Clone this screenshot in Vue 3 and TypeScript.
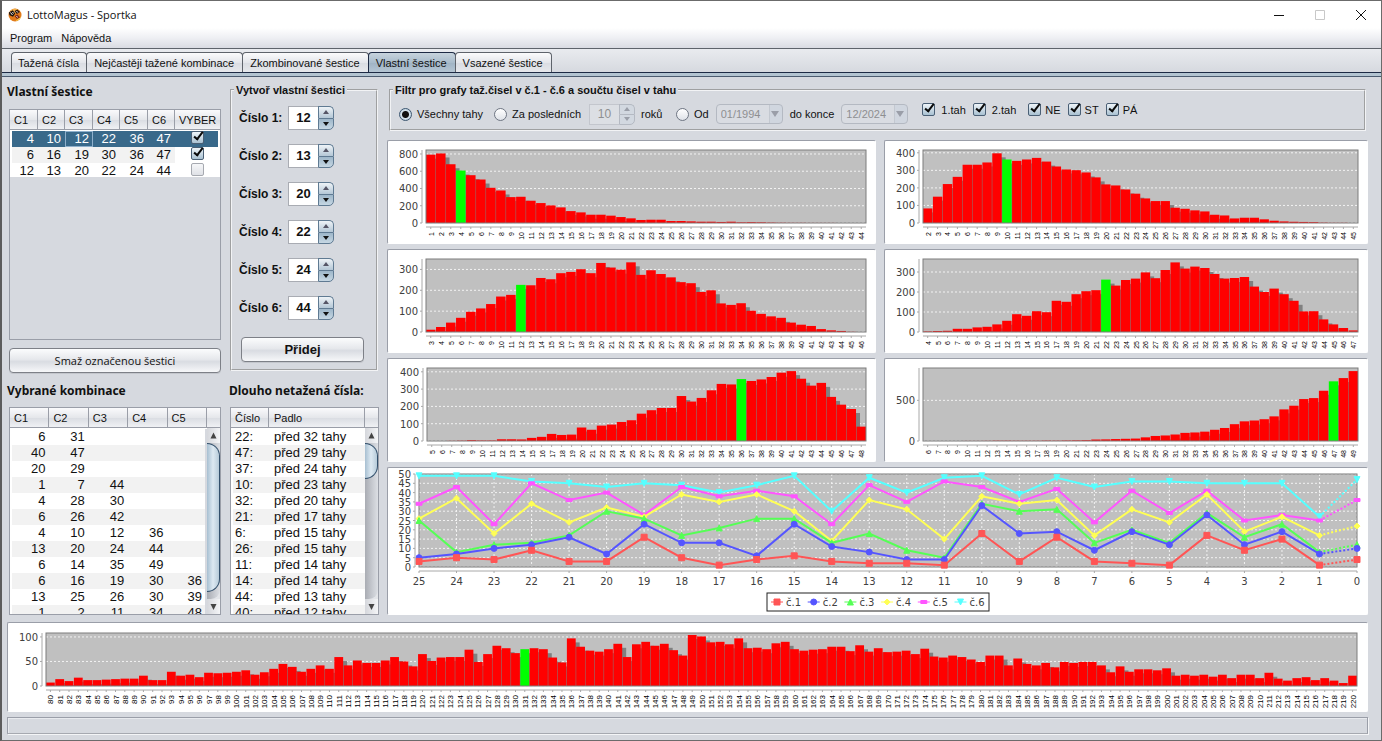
<script setup lang="ts">
import { ref } from 'vue'

interface Histogram {
  id: string
  label: string
  width: number
  height: number
  plotX: number
  plotY: number
  plotW: number
  plotH: number
  axisMax: number
  ticks: number[]
  first: number
  marked: number
  fontSize: number
  values: number[]
}

const small = { height: 102, plotY: 9, plotH: 73, fontSize: 7 }

const histograms: Histogram[] = [
  {
    ...small, id: 'n1', label: 'č.1', width: 487, plotX: 38, plotW: 440, axisMax: 846, ticks: [0, 200, 400, 600, 800], first: 1, marked: 4,
    values: [792, 806, 681, 608, 554, 504, 408, 377, 300, 304, 258, 231, 204, 181, 138, 123, 96, 96, 85, 69, 54, 35, 38, 38, 23, 23, 19, 15, 15, 12, 15, 8, 10, 8, 5, 3, 2, 2, 1, 1, 1, 0, 0, 0],
  },
  {
    ...small, id: 'n2', label: 'č.2', width: 482, plotX: 38, plotW: 435, axisMax: 416, ticks: [0, 100, 200, 300, 400], first: 2, marked: 10,
    values: [83, 150, 222, 263, 332, 332, 345, 397, 362, 354, 362, 371, 350, 322, 305, 301, 288, 260, 220, 214, 191, 167, 140, 125, 125, 87, 81, 72, 66, 47, 43, 26, 30, 30, 21, 13, 9, 7, 6, 5, 2, 1, 1, 0],
  },
  {
    ...small, id: 'n3', label: 'č.3', width: 487, plotX: 38, plotW: 440, axisMax: 350, ticks: [0, 100, 200, 300], first: 3, marked: 12,
    values: [11, 24, 45, 68, 97, 113, 134, 170, 178, 226, 224, 259, 253, 282, 288, 301, 282, 331, 309, 299, 334, 274, 296, 278, 262, 239, 234, 192, 200, 137, 130, 138, 102, 87, 75, 68, 45, 35, 29, 14, 8, 5, 1, 0],
  },
  {
    ...small, id: 'n4', label: 'č.4', width: 482, plotX: 38, plotW: 435, axisMax: 365, ticks: [0, 100, 200, 300], first: 4, marked: 22,
    values: [3, 5, 6, 16, 16, 23, 26, 38, 56, 89, 81, 104, 99, 156, 151, 189, 204, 209, 262, 232, 260, 267, 298, 269, 310, 348, 317, 327, 320, 290, 267, 270, 275, 227, 200, 217, 189, 156, 103, 104, 63, 38, 20, 8],
  },
  {
    ...small, id: 'n5', label: 'č.5', width: 487, plotX: 39, plotW: 439, axisMax: 422, ticks: [0, 100, 200, 300, 400], first: 5, marked: 36,
    values: [0, 0, 1, 2, 5, 3, 3, 10, 10, 9, 18, 24, 41, 35, 37, 78, 65, 89, 95, 110, 120, 158, 178, 191, 191, 260, 228, 249, 293, 330, 327, 358, 347, 356, 370, 395, 404, 360, 320, 336, 255, 210, 185, 83],
  },
  {
    ...small, id: 'n6', label: 'č.6', width: 482, plotX: 38, plotW: 435, axisMax: 898, ticks: [0, 500], first: 6, marked: 47,
    values: [0, 0, 0, 0, 1, 1, 2, 4, 4, 3, 3, 3, 5, 4, 6, 8, 10, 18, 20, 24, 27, 30, 45, 62, 68, 80, 100, 105, 115, 138, 160, 207, 242, 252, 268, 303, 389, 434, 516, 528, 618, 734, 774, 860],
  },
  {
    id: 'sum', label: 'Součet', width: 1359, height: 88, plotX: 38, plotY: 10, plotW: 1311, plotH: 53, fontSize: 8, axisMax: 108, ticks: [0, 50, 100], first: 80, marked: 131,
    values: [
      7, 14, 10, 17, 12, 12, 13, 14, 15, 15, 21, 12, 12, 29, 21, 23, 18, 27, 26, 27,
      29, 32, 23, 28, 35, 45, 39, 29, 35, 42, 35, 59, 42, 52, 47, 47, 52, 59, 50, 40,
      65, 51, 58, 59, 59, 74, 49, 65, 82, 77, 67, 75, 77, 75, 58, 48, 97, 80, 72, 70,
      75, 86, 59, 85, 90, 82, 86, 73, 62, 104, 101, 89, 90, 85, 97, 77, 78, 75, 87, 90,
      75, 72, 74, 75, 80, 80, 71, 83, 70, 77, 69, 70, 72, 65, 76, 60, 58, 62, 59, 54,
      49, 62, 62, 42, 56, 45, 42, 47, 38, 49, 47, 49, 49, 42, 28, 40, 29, 34, 34, 32,
      36, 21, 23, 21, 23, 19, 23, 16, 23, 23, 16, 27, 15, 11, 16, 18, 12, 16, 11, 6, 21,
    ],
  },
]

const GAP = 0.5
const SHADOW = 4

function yOf(c: Histogram, v: number): number {
  return c.plotY + c.plotH - (v / c.axisMax) * c.plotH
}

function barsOf(c: Histogram) {
  const n = c.values.length
  const w = (c.plotW - GAP * (n - 1)) / n
  const right = c.plotX + c.plotW
  const bottom = c.plotY + c.plotH
  return c.values.map((v, i) => {
    const x = c.plotX + i * (w + GAP)
    const h = (v / c.axisMax) * c.plotH
    return {
      name: c.first + i,
      x,
      y: bottom - h,
      w,
      h,
      mid: x + w / 2,
      sx: x + SHADOW,
      sy: bottom - Math.max(0, h - SHADOW),
      sw: Math.max(0, Math.min(w, right - x - SHADOW)),
      sh: Math.max(0, h - SHADOW),
    }
  })
}

const charts = histograms.map((c) => ({ ...c, bars: barsOf(c), marks: c.ticks.map((v) => ({ v, y: yOf(c, v) })) }))

const plot = { x: 31, y: 6, w: 938, h: 93 }
const lx = (i: number): number => plot.x + (i * plot.w) / 25
const ly = (v: number): number => plot.y + plot.h - (v / 50) * plot.h

const series = [
  { name: 'č.1', color: '#ff5555', shape: 'M-3-3h6v6h-6z', data: [3, 5, 4, 9, 3, 3, 16, 5, 1, 4, 6, 3, 2, 2, 1, 18, 3, 16, 3, 2, 1, 17, 9, 15, 1, 4] },
  { name: 'č.2', color: '#5555ff', shape: 'M-3 0a3 3 0 1 0 6 0a3 3 0 1 0-6 0z', data: [5, 7, 10, 12, 16, 7, 23, 13, 13, 6, 23, 11, 8, 4, 4, 33, 18, 19, 9, 19, 12, 28, 12, 19, 7, 10] },
  { name: 'č.3', color: '#55ff55', shape: 'M0-3l3 6h-6z', data: [25, 8, 12, 13, 17, 30, 26, 17, 21, 26, 26, 13, 18, 9, 5, 34, 30, 31, 13, 20, 13, 29, 16, 23, 8, 12] },
  { name: 'č.4', color: '#ffff55', shape: 'M0-3l3 3l-3 3l-3-3z', data: [26, 37, 18, 34, 24, 32, 27, 39, 35, 39, 30, 14, 36, 31, 15, 38, 34, 36, 17, 31, 24, 39, 19, 27, 17, 22] },
  { name: 'č.5', color: '#ff55ff', shape: 'M-3-1.5h6v3h-6z', data: [34, 43, 23, 45, 36, 40, 28, 43, 38, 41, 38, 23, 44, 35, 46, 43, 35, 42, 24, 41, 29, 41, 25, 28, 25, 36] },
  { name: 'č.6', color: '#55ffff', shape: 'M-3-3h6l-3 6z', data: [49, 49, 49, 46, 45, 43, 45, 44, 40, 44, 49, 30, 48, 40, 48, 49, 39, 48, 43, 46, 46, 45, 45, 45, 27, 47] },
].map((s) => {
  const pts = s.data.map((v, i) => ({ x: lx(i), y: ly(v) }))
  return {
    ...s,
    pts,
    solid: pts.slice(0, 25).map((p) => `${p.x},${p.y}`).join(' '),
    dotted: pts.slice(24).map((p) => `${p.x},${p.y}`).join(' '),
  }
}).reverse()

const legend = [...series].reverse()
const lineTicks = [0, 5, 10, 15, 20, 25, 30, 35, 40, 45, 50]
const draws = Array.from({ length: 26 }, (_, i) => i)

const tabs = ['Tažená čísla', 'Nejčastěji tažené kombinace', 'Zkombinované šestice', 'Vlastní šestice', 'Vsazené šestice']
const activeTab = ref(3)

const sixes = ref([
  { nums: [4, 10, 12, 22, 36, 47], picked: true },
  { nums: [6, 16, 19, 30, 36, 47], picked: true },
  { nums: [12, 13, 20, 22, 24, 44], picked: false },
])
const selected = ref(0)

const own = ref([12, 13, 20, 22, 24, 44])
function step(i: number, d: number): void {
  own.value[i] = Math.min(49, Math.max(1, Number(own.value[i]) + d))
}
function addSix(): void {
  sixes.value.push({ nums: own.value.map(Number), picked: false })
}
function removeSix(): void {
  sixes.value.splice(selected.value, 1)
}

const combos: number[][] = [
  [6, 31], [40, 47], [20, 29], [1, 7, 44], [4, 28, 30], [6, 26, 42], [4, 10, 12, 36],
  [13, 20, 24, 44], [6, 14, 35, 49], [6, 16, 19, 30, 36], [13, 25, 26, 30, 39], [1, 2, 11, 34, 48],
]
const missing: [number, number][] = [
  [22, 32], [47, 29], [37, 24], [10, 23], [32, 20], [21, 17], [6, 15], [26, 15], [11, 14], [14, 14], [44, 13], [40, 12],
]

const range = ref('all')
const years = ref(10)
const from = ref('01/1994')
const to = ref('12/2024')
const drawFilters = ref([
  { name: '1.tah', on: true },
  { name: '2.tah', on: true },
])
const dayFilters = ref([
  { name: 'NE', on: true },
  { name: 'ST', on: true },
  { name: 'PÁ', on: true },
])
</script>

<template>
  <div class="window">
    <header class="titlebar">
      <svg class="logo" viewBox="0 0 14 14" aria-hidden="true">
        <circle cx="7" cy="7" r="6.5" fill="#e07a1c" />
        <path d="M2.500 2.500a6.500 6.500 0 0 1 9 0l-4.500 3z" fill="#f3b04a" />
        <path d="M8 12.500l5-4a6.500 6.500 0 0 1-5 4.500z" fill="#f8cf4a" />
        <path d="M.8 4.500l4-2.300l2.400 3.300l-2.200 3.300l-3.500-1.600z" fill="#1c130c" />
        <path d="M6.500 3l3-1.500l2.500 2.500l-3.200 2z" fill="#2a160e" />
        <path d="M6.500 8l3-1.500l2.500 3l-3 1.500z" fill="#7a2412" />
        <path d="M2.500 4.500l2 2.500M4.500 4l1 1.500M8.500 3l1.200 1.500M8.500 8l1 1.500" stroke="#fff" stroke-width=".9" />
      </svg>
      <span class="title">LottoMagus - Sportka</span>
      <button class="sys" type="button" aria-label="Minimalizovat"><svg viewBox="0 0 10 10"><path d="M0 5.500h10" stroke="#111" /></svg></button>
      <button class="sys" type="button" aria-label="Maximalizovat"><svg viewBox="0 0 10 10"><path d="M.5.5h9v9h-9z" fill="none" stroke="#c8c8c8" /></svg></button>
      <button class="sys" type="button" aria-label="Zavřít"><svg viewBox="0 0 10 10"><path d="M0 0l10 10M10 0l-10 10" stroke="#111" /></svg></button>
    </header>

    <nav class="menubar">
      <button type="button">Program</button>
      <button type="button">Nápověda</button>
    </nav>

    <div class="tabs" role="tablist">
      <button v-for="(t, i) in tabs" :key="t" type="button" role="tab" :aria-selected="i === activeTab" :class="{ active: i === activeTab }" @click="activeTab = i">{{ t }}</button>
    </div>

    <main class="content">
      <section class="col sixes">
        <h2>Vlastní šestice</h2>
        <div class="box six-box">
          <div class="clip">
            <table class="six-table">
              <colgroup><col v-for="n in 6" :key="n" class="c-num" /><col /></colgroup>
              <thead><tr><th v-for="n in 6" :key="n">C{{ n }}</th><th>VYBER</th></tr></thead>
              <tbody>
                <tr v-for="(s, i) in sixes" :key="i" :class="{ selected: i === selected }" @click="selected = i">
                  <td v-for="(n, j) in s.nums" :key="j" :class="{ focus: i === selected && j === 2 }">{{ n }}</td>
                  <td class="pick"><input v-model="s.picked" type="checkbox" class="check" :aria-label="'Vybrat šestici ' + (i + 1)" /></td>
                </tr>
              </tbody>
            </table>
          </div>
        </div>
        <button type="button" class="btn remove" @click="removeSix">Smaž označenou šestici</button>
        <h2>Vybrané kombinace</h2>
        <div class="box list-box">
          <table class="combo-table">
            <thead><tr><th v-for="n in 5" :key="n">C{{ n }}</th></tr></thead>
            <tbody>
              <tr v-for="(c, i) in combos" :key="i"><td v-for="j in 5" :key="j">{{ c[j - 1] ?? '' }}</td></tr>
            </tbody>
          </table>
          <div class="scroll" aria-hidden="true">
            <div class="corner"></div>
            <svg class="arrow" viewBox="0 0 13 15"><path d="M6.500 4.500l3 6h-6z" fill="#444" /></svg>
            <div class="track"><div class="thumb long"></div></div>
            <svg class="arrow" viewBox="0 0 13 15"><path d="M6.500 11l3-6h-6z" fill="#444" /></svg>
          </div>
        </div>
      </section>

      <section class="col create">
        <fieldset class="own">
          <legend>Vytvoř vlastní šestici</legend>
          <div v-for="(n, i) in own" :key="i" class="num-row">
            <label :for="'own' + i">Číslo {{ i + 1 }}:</label>
            <span class="spinner">
              <input :id="'own' + i" v-model="own[i]" type="text" inputmode="numeric" />
              <span class="steps">
                <button type="button" aria-label="Zvýšit" @click="step(i, 1)"><svg viewBox="0 0 6 4"><path d="M3 0l3 4h-6z" fill="#556" /></svg></button>
                <button type="button" aria-label="Snížit" @click="step(i, -1)"><svg viewBox="0 0 6 4"><path d="M3 4l3-4h-6z" fill="#111" /></svg></button>
              </span>
            </span>
          </div>
          <button type="button" class="btn add" @click="addSix">Přidej</button>
        </fieldset>
        <h2>Dlouho netažená čísla:</h2>
        <div class="box list-box miss-box">
          <table class="miss-table">
            <colgroup><col class="c-no" /><col /></colgroup>
            <thead><tr><th>Číslo</th><th>Padlo</th></tr></thead>
            <tbody>
              <tr v-for="m in missing" :key="m[0]"><td>{{ m[0] }}:</td><td>před {{ m[1] }} tahy</td></tr>
            </tbody>
          </table>
          <div class="scroll" aria-hidden="true">
            <div class="corner"></div>
            <svg class="arrow" viewBox="0 0 13 15"><path d="M6.500 4.500l3 6h-6z" fill="#444" /></svg>
            <div class="track"><div class="thumb"></div></div>
            <svg class="arrow" viewBox="0 0 13 15"><path d="M6.500 11l3-6h-6z" fill="#444" /></svg>
          </div>
        </div>
      </section>

      <fieldset class="filter">
        <legend>Filtr pro grafy taž.čisel v č.1 - č.6 a součtu čisel v tahu</legend>
        <div class="filter-row">
          <label class="opt all"><input v-model="range" type="radio" value="all" name="range" />Všechny tahy</label>
          <label class="opt last"><input v-model="range" type="radio" value="last" name="range" />Za posledních</label>
          <span class="spinner off">
            <input v-model="years" type="text" aria-label="Počet roků" :disabled="range !== 'last'" />
            <span class="steps">
              <button type="button" aria-label="Více roků" :disabled="range !== 'last'"><svg viewBox="0 0 6 4"><path d="M3 0l3 4h-6z" fill="#9a9ea8" /></svg></button>
              <button type="button" aria-label="Méně roků" :disabled="range !== 'last'"><svg viewBox="0 0 6 4"><path d="M3 4l3-4h-6z" fill="#9a9ea8" /></svg></button>
            </span>
          </span>
          <span class="years">roků</span>
          <label class="opt"><input v-model="range" type="radio" value="from" name="range" />Od</label>
          <span class="combo"><select v-model="from" aria-label="Od" :disabled="range !== 'from'"><option>01/1994</option></select></span>
          <label for="to" class="until">do konce</label>
          <span class="combo"><select id="to" v-model="to" :disabled="range !== 'from'"><option>12/2024</option></select></span>
          <div class="checks">
            <label v-for="f in drawFilters" :key="f.name" class="opt"><input v-model="f.on" type="checkbox" class="check" />{{ f.name }}</label>
          </div>
          <div class="checks days">
            <label v-for="f in dayFilters" :key="f.name" class="opt"><input v-model="f.on" type="checkbox" class="check" />{{ f.name }}</label>
          </div>
        </div>
      </fieldset>

      <figure v-for="c in charts" :key="c.id" class="panel" :class="c.id">
        <svg :viewBox="`0 0 ${c.width} ${c.height}`" role="img" :aria-label="c.label">
          <rect class="plot" :x="c.plotX" :y="c.plotY" :width="c.plotW" :height="c.plotH" />
          <line v-for="m in c.marks" :key="m.v" class="grid" :x1="c.plotX" :x2="c.plotX + c.plotW" :y1="m.y" :y2="m.y" />
          <template v-for="b in c.bars" :key="b.name">
            <rect class="shadow" :x="b.sx" :y="b.sy" :width="b.sw" :height="b.sh" />
            <rect class="bar" :class="{ hit: b.name === c.marked }" :x="b.x" :y="b.y" :width="b.w" :height="b.h" />
          </template>
          <rect class="frame" :x="c.plotX" :y="c.plotY" :width="c.plotW" :height="c.plotH" />
          <path class="axis" :d="`M${c.plotX - 4} ${c.plotY}v${c.plotH}M${c.plotX} ${c.plotY + c.plotH + 4}h${c.plotW}`" />
          <g v-for="m in c.marks" :key="'t' + m.v">
            <path class="axis" :d="`M${c.plotX - 6} ${m.y}h2`" />
            <text class="value" :x="c.plotX - 8" :y="m.y + 4">{{ m.v }}</text>
          </g>
          <g v-for="b in c.bars" :key="'l' + b.name">
            <path class="axis" :d="`M${b.mid} ${c.plotY + c.plotH + 4}v2`" />
            <text class="cat" :font-size="c.fontSize" :transform="`translate(${b.mid + 3} ${c.plotY + c.plotH + 9}) rotate(-90)`">{{ b.name }}</text>
          </g>
        </svg>
      </figure>

      <figure class="panel lines">
        <svg viewBox="0 0 979 146" role="img" aria-label="Vývoj č.1 – č.6">
          <rect class="plot" :x="plot.x" :y="plot.y" :width="plot.w" :height="plot.h" />
          <line v-for="v in lineTicks" :key="v" class="grid" :x1="plot.x" :x2="plot.x + plot.w" :y1="ly(v)" :y2="ly(v)" />
          <line v-for="d in draws" :key="d" class="grid" :x1="lx(d)" :x2="lx(d)" :y1="plot.y" :y2="plot.y + plot.h" />
          <rect class="frame" :x="plot.x" :y="plot.y" :width="plot.w" :height="plot.h" />
          <g v-for="s in series" :key="s.name" :stroke="s.color" :fill="s.color">
            <polyline class="line" :points="s.solid" />
            <polyline class="line dotted" :points="s.dotted" />
            <path v-for="(p, i) in s.pts" :key="i" :d="s.shape" :transform="`translate(${p.x} ${p.y})`" />
          </g>
          <path class="axis" :d="`M${plot.x - 4} ${plot.y}v${plot.h}M${plot.x} ${plot.y + plot.h + 4}h${plot.w}`" />
          <g v-for="v in lineTicks" :key="'v' + v">
            <path class="axis" :d="`M${plot.x - 6} ${ly(v)}h2`" />
            <text class="value" :x="plot.x - 8" :y="ly(v) + 4">{{ v }}</text>
          </g>
          <g v-for="d in draws" :key="'d' + d">
            <path class="axis" :d="`M${lx(d)} ${plot.y + plot.h + 4}v2`" />
            <text class="value mid" :x="lx(d)" y="117">{{ 25 - d }}</text>
          </g>
          <rect x="379" y="125" width="222" height="18" fill="#fff" stroke="#222" />
          <g v-for="(s, i) in legend" :key="'g' + s.name" :transform="`translate(${389 + i * 36.7} 134)`">
            <path d="M-6 0h12" :stroke="s.color" />
            <path :d="s.shape" :fill="s.color" :stroke="s.color" />
            <text class="value start" x="9" y="4">{{ s.name }}</text>
          </g>
        </svg>
      </figure>

      <div class="status" role="status"></div>
    </main>
  </div>
</template>

<style>
body {
  margin: 0;
  background: #d6d9df;
}
</style>

<style scoped>
.window {
  box-sizing: border-box;
  min-height: 100vh;
  display: flex;
  flex-direction: column;
  border: 1px solid #6b6b6b;
  border-left: 2px solid #5c5c5c;
  background: #d6d9df;
  color: #111;
  font: 11px/14px "Liberation Sans", Arial, sans-serif;
}
button,
input,
select {
  font: inherit;
  color: inherit;
  margin: 0;
  padding: 0;
  box-sizing: border-box;
}
svg {
  display: block;
}
.titlebar {
  display: flex;
  align-items: center;
  height: 27px;
  padding: 0 0 0 6px;
  background: #fff;
}
.logo {
  width: 14px;
  height: 14px;
}
.title {
  flex: 1;
  margin-left: 5px;
  font: 11px/16px "Open Sans", "Noto Sans", sans-serif;
}
.sys {
  width: 41px;
  height: 26px;
  border: 0;
  background: none;
  display: grid;
  place-items: center;
}
.sys svg {
  width: 10px;
  height: 10px;
}
.menubar {
  display: flex;
  gap: 9px;
  height: 20px;
  padding: 0 8px;
  background: linear-gradient(#fff, #eeeff3 50%, #d9dbe2);
  border-bottom: 1px solid #5e636b;
}
.menubar button {
  border: 0;
  background: none;
}
.tabs {
  display: flex;
  padding: 3px 9px 0;
  background: linear-gradient(#e9ebef, #d6d9df);
  border-bottom: 1px solid #1d2a44;
}
.tabs button {
  height: 20px;
  margin-right: -1px;
  padding: 0 8px 0 7px;
  border: 1px solid #5e636b;
  border-bottom: 0;
  border-radius: 4px 4px 0 0;
  background: linear-gradient(#fbfbfc, #e4e6eb 50%, #d9dce2 51%, #e6e8ec);
}
.tabs button:first-child {
  padding: 0 7px 0 6px;
}
.tabs button.active {
  border-color: #1d2a44;
  background: linear-gradient(#c7d3dd, #a9bccb 50%, #9fb3c4 51%, #b4c5d3);
}
.content {
  flex: 1;
  display: grid;
  grid-template-columns: 214px 150px minmax(0, 489fr) minmax(0, 484fr);
  grid-template-rows: auto auto auto auto auto auto 1fr;
  column-gap: 8px;
  row-gap: 5px;
  padding: 7px 13px 6px 5px;
  border-top: 3px solid #b3c4d1;
  box-shadow: inset 0 1px 0 #4c5c70;
}
.col {
  grid-row: 1 / 6;
  display: flex;
  flex-direction: column;
  min-height: 0;
}
.sixes {
  grid-column: 1;
}
.create {
  grid-column: 2;
}
h2 {
  margin: 0;
  font: bold 12px/18px "Noto Sans", sans-serif;
  white-space: nowrap;
}
.box {
  margin-left: 2px;
  border: 1px solid #9a9ea8;
  box-sizing: border-box;
}
.create .box {
  margin-left: 1px;
}
.six-box {
  height: 231px;
  margin-top: 8px;
}
.clip {
  max-height: 67px;
  overflow: hidden;
  background: #fff;
}
.list-box {
  display: flex;
  height: 0;
  flex: 1 1 auto;
  margin-top: 7px;
  overflow: hidden;
  background: #fff;
}
table {
  width: 100%;
  table-layout: fixed;
  border-collapse: separate;
  border-spacing: 0;
}
th {
  height: 20px;
  padding: 0 0 0 4px;
  box-sizing: border-box;
  border-right: 1px solid #9a9ea8;
  border-bottom: 1px solid #9a9ea8;
  background: linear-gradient(#fafafc, #e5e7eb 50%, #d9dce2 51%, #f0f1f4);
  font-weight: normal;
  text-align: left;
}
td {
  height: 16px;
  padding: 0 4px 0 0;
  font-size: 13px;
  line-height: 16px;
  text-align: right;
  white-space: nowrap;
}
td:first-child {
  border-left: 2px solid #fff;
}
tbody tr:nth-child(even) td {
  background: #f2f2f2;
}
tbody::before {
  content: "";
  display: block;
  height: 1px;
}
.c-num {
  width: 27px;
}
.c-num:nth-child(odd) {
  width: 28px;
}
.six-table th:last-child {
  border-right: 0;
}
tbody tr.selected td {
  background: #39698a;
  color: #fff;
}
tbody tr.selected td.focus {
  outline: 1px solid #8fb0cc;
  outline-offset: -1px;
}
.six-table td.pick {
  padding: 0 0 0 2px;
  text-align: center;
  border-right: 2px solid #fff;
}
.six-table tr:not(.selected) td.pick {
  background: #fff;
}
.combo-table td:last-child {
  padding-right: 3px;
  border-right: 2px solid #d6d9df;
}
.miss-table td {
  padding: 0 0 0 2px;
  text-align: left;
}
.miss-table td + td,
.miss-table th + th {
  padding-left: 5px;
}
.c-no {
  width: 38px;
}
.scroll {
  flex: none;
  width: 13px;
  display: flex;
  flex-direction: column;
  background: #e3e5e9;
}
.corner {
  height: 19px;
  border-bottom: 1px solid #9a9ea8;
  background: linear-gradient(#fafafc, #e5e7eb 50%, #d9dce2 51%, #f0f1f4);
}
.arrow {
  width: 13px;
  height: 15px;
  background: linear-gradient(90deg, #d5d7dc, #f4f5f7);
}
.track {
  flex: 1;
  overflow: hidden;
  background: linear-gradient(90deg, #a9acb3, #c9ccd2 60%, #dcdfe4);
  border-radius: 0 0 9px 0;
}
.thumb {
  height: 36px;
  box-sizing: border-box;
  border: 1px solid #33506c;
  border-left: 0;
  border-radius: 0 13px 13px 0;
  background: linear-gradient(90deg, #a7bfd1, #dde9f2 50%, #b7cbd9);
}
.thumb.long {
  height: 149px;
}
.btn {
  border: 1px solid #7d8087;
  border-radius: 4px;
  background: linear-gradient(#fbfcfd, #e6e8ec 45%, #d9dce2 55%, #f6f7f9);
  box-shadow: 0 1px 0 #c3c6cc;
}
.remove {
  height: 25px;
  margin: 8px 0 9px 2px;
  font: 11px/14px "Open Sans", "Noto Sans", sans-serif;
}
fieldset {
  min-width: 0;
  margin: 0;
  padding: 0;
  border: 2px groove #f2f3f5;
}
legend {
  margin-left: 2px;
  padding: 0 2px;
  font-weight: bold;
  line-height: 14px;
}
.own {
  margin: 0 1px 10px 1px;
  height: 288px;
  box-sizing: border-box;
}
.num-row {
  display: flex;
  align-items: center;
  height: 24px;
  margin: 0 0 14px 7px;
}
.num-row:first-of-type {
  margin-top: 9px;
}
.num-row label {
  width: 49px;
  font: bold 12px/16px "Liberation Sans", Arial, sans-serif;
}
.spinner {
  display: flex;
  width: 46px;
  height: 24px;
}
.spinner input {
  width: 30px;
  border: 1px solid #a9acb3;
  border-right: 0;
  background: #fff;
  text-align: center;
  font-size: 13px;
  font-weight: bold;
}
.steps {
  flex: 1;
  display: flex;
  flex-direction: column;
}
.steps button {
  flex: 1;
  display: grid;
  place-items: center;
  border: 1px solid #5f7a92;
  background: linear-gradient(#eef3f7, #b4c7d6);
}
.steps button:first-child {
  border-bottom: 0;
  border-radius: 0 5px 0 0;
}
.steps button:last-child {
  border-radius: 0 0 5px 0;
  background: linear-gradient(#9db6c9, #c6d7e3);
}
.steps svg {
  width: 6px;
  height: 4px;
}
.add {
  display: block;
  width: calc(100% - 21px);
  height: 25px;
  margin: 17px 0 0 9px;
  font-size: 13px;
  font-weight: bold;
}
.create h2 {
  padding-top: 1px;
}
.filter {
  grid-column: 3 / 5;
  margin: 0 2px 4px;
  height: 48px;
  box-sizing: border-box;
}
.filter-row {
  display: flex;
  align-items: center;
  height: 30px;
  padding: 4px 0 0 8px;
  box-sizing: border-box;
  white-space: nowrap;
}
.opt {
  display: flex;
  align-items: center;
}
.all {
  width: 95px;
}
.last {
  width: 95px;
}
.opt input[type="radio"] {
  appearance: none;
  width: 13px;
  height: 13px;
  margin-right: 5px;
  border: 1px solid #6f7683;
  border-radius: 50%;
  background: linear-gradient(#fff, #dfe2e8);
}
.opt input[type="radio"]:checked {
  border-color: #3c5670;
  background: radial-gradient(circle, #111 0 3px, #d4e2ec 4px, #a9c1d2);
}
.check {
  appearance: none;
  display: inline-grid;
  place-items: center;
  width: 13px;
  height: 13px;
  border: 1px solid #a6a9b0;
  border-radius: 2px;
  background: linear-gradient(#f6f7f9, #dfe1e6);
  vertical-align: top;
}
.check:checked {
  border-color: #4a5f75;
  background: linear-gradient(#eef4f8, #a9c1d2);
}
.check:checked::before {
  content: "";
  width: 3px;
  height: 8px;
  margin: -5px 0 0 2px;
  border: solid #0a0a0a;
  border-width: 0 2px 2px 0;
  transform: rotate(38deg);
}
.off {
  height: 21px;
}
.off input {
  color: #8e8f91;
  background: #dcdfe4;
  border-color: #c3c6cd;
  font-size: 12px;
  font-weight: normal;
}
.off .steps button,
.off .steps button:last-child {
  border-color: #b4b9c2;
  background: #d2d8e0;
}
.years {
  width: 35px;
  padding-left: 6px;
}
.combo {
  display: grid;
  align-items: center;
  width: 67px;
  height: 21px;
  margin-left: 7px;
}
.combo::after {
  content: "";
  grid-area: 1 / 1;
  justify-self: end;
  margin-right: 4px;
  border: solid transparent;
  border-width: 6px 4px 0;
  border-top-color: #9a9ea8;
}
.combo select {
  grid-area: 1 / 1;
  appearance: none;
  width: 100%;
  height: 20px;
  padding: 0 0 0 4px;
  border: 1px solid #b4b9c2;
  border-radius: 4px;
  background: linear-gradient(90deg, #d9dce2 52px, #c3c8d0 52px 53px, #d0d6df 53px);
  color: #8e8f91;
  font-size: 11px;
  opacity: 1;
}
.until {
  margin-left: 7px;
}
.checks {
  display: flex;
  gap: 7px;
  margin: 0 0 9px 14px;
}
.days {
  margin-left: 12px;
}
.checks .check {
  margin-right: 6px;
}
.days .check {
  margin-right: 4px;
}
.panel {
  margin: 0;
  border: 1px solid #fff;
  border-top-color: #9a9ea8;
  border-left-color: #9a9ea8;
  border-radius: 2px;
  background: #fff;
}
.panel svg {
  width: 100%;
  height: auto;
}
.n1,
.n3,
.n5 {
  grid-column: 3;
}
.n2,
.n4,
.n6 {
  grid-column: 4;
}
.n1,
.n2 {
  grid-row: 2;
}
.n3,
.n4 {
  grid-row: 3;
}
.n5,
.n6 {
  grid-row: 4;
}
.lines {
  grid-column: 3 / 5;
  grid-row: 5;
}
.sum {
  grid-column: 1 / 5;
  grid-row: 6;
  margin-top: 2px;
}
.plot {
  fill: #c0c0c0;
}
.frame {
  fill: none;
  stroke: #7c7c7c;
}
.grid {
  stroke: #f2f2f2;
  stroke-dasharray: 2 2;
}
.shadow {
  fill: #808080;
}
.bar {
  fill: #f00;
}
.bar.hit {
  fill: #0f0;
}
.axis {
  fill: none;
  stroke: #a8a8a8;
}
.value {
  fill: #404040;
  font: 10px "DejaVu Sans", sans-serif;
  text-anchor: end;
}
.value.mid {
  text-anchor: middle;
}
.value.start {
  text-anchor: start;
}
.cat {
  fill: #000;
  font-family: "Liberation Sans", Arial, sans-serif;
  text-anchor: end;
}
.line {
  fill: none;
  stroke-width: 2;
}
.dotted {
  stroke-dasharray: 2 2;
}
.status {
  grid-column: 1 / 5;
  min-height: 14px;
  border: 1px solid #9a9ea8;
  border-bottom-color: #a6a9b0;
  box-shadow: 1px 1px 0 #f4f5f7, inset 1px 1px 0 #e8eaee;
}
</style>
